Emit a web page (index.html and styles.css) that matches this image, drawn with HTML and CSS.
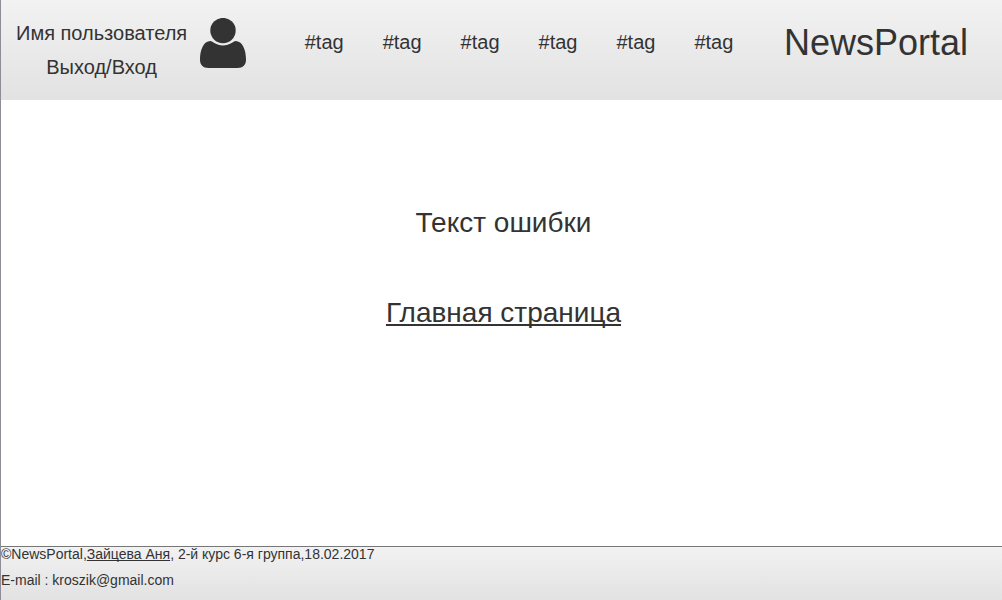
FILE: index.html
```html
<!DOCTYPE html>
<html lang="ru">
<head>
<meta charset="utf-8">
<meta name="viewport" content="width=device-width, initial-scale=1">
<title>NewsPortal</title>
<link rel="stylesheet" href="styles.css">
</head>
<body class="page">
<header class="header">
  <div class="user">
    <div class="user-links">
      <span class="user-name">Имя пользователя</span>
      <a class="user-login" href="#">Выход/Вход</a>
    </div>
    <svg class="user-icon" viewBox="0 0 46 50" aria-hidden="true">
      <circle cx="23" cy="12.6" r="12.7"/>
      <path d="M10.500 23C3.500 23 0 32 0 41.500C0 47 3 50 8.500 50H37.500C43 50 46 47 46 41.500C46 32 42.500 23 35.500 23C33.500 23 30 27.500 23 27.500S12.500 23 10.500 23Z"/>
    </svg>
  </div>
  <nav class="tags">
    <a class="tag" href="#">#tag</a>
    <a class="tag" href="#">#tag</a>
    <a class="tag" href="#">#tag</a>
    <a class="tag" href="#">#tag</a>
    <a class="tag" href="#">#tag</a>
    <a class="tag" href="#">#tag</a>
  </nav>
  <a class="brand" href="#">NewsPortal</a>
</header>
<main class="content">
  <p class="message">Текст ошибки</p>
  <a class="home-link" href="#">Главная страница</a>
</main>
<footer class="footer">
  <p class="footer-line">©NewsPortal,<a class="author" href="#">Зайцева Аня</a>, 2-й курс 6-я группа,18.02.2017</p>
  <p class="footer-line">E-mail : kroszik@gmail.com</p>
</footer>
</body>
</html>
```
FILE: styles.css
```css
* {
  box-sizing: border-box;
}

.page {
  display: flex;
  flex-direction: column;
  min-height: 100vh;
  margin: 0;
  border-left: 1px solid #8b8d98;
  background: #fff;
  color: #333;
  font-family: "Liberation Sans", Arial, sans-serif;
  font-size: 20px;
}

a {
  color: inherit;
  text-decoration: none;
}

.header {
  display: flex;
  justify-content: space-between;
  align-items: flex-start;
  padding: 16px 34px 16px 15px;
  background: linear-gradient(#f2f2f2, #e2e2e2);
}

.user {
  display: flex;
  gap: 13px;
  padding-right: 8px;
}

.user-links {
  display: flex;
  flex-direction: column;
  align-items: center;
  line-height: 34px;
}

.user-icon {
  width: 46px;
  height: 50px;
  margin-top: 2px;
  fill: #333;
}

.tags {
  display: flex;
  gap: 39px;
  line-height: 52px;
}

.brand {
  font-size: 36px;
  line-height: 54px;
}

.content {
  display: flex;
  flex: 1;
  flex-direction: column;
  align-items: center;
  gap: 58px;
  padding-top: 107px;
  padding-left: 4px;
  font-size: 28px;
  line-height: 32px;
}

.message {
  margin: 0;
}

.home-link,
.author {
  text-decoration: underline;
  text-decoration-skip-ink: none;
}

.footer {
  display: flex;
  flex-direction: column;
  gap: 12px;
  padding-bottom: 13px;
  border-top: 1px solid #777;
  background: linear-gradient(#f2f2f2, #e2e2e2);
  font-size: 14px;
  line-height: 14px;
}

.footer-line {
  margin: 0;
}
```
